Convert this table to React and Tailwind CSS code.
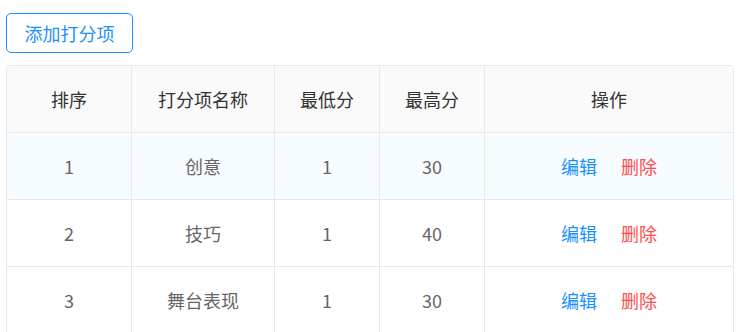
import React from "react";

const rows = [
  { i: 1, name: "创意", min: 1, max: 30, hover: true },
  { i: 2, name: "技巧", min: 1, max: 40 },
  { i: 3, name: "舞台表现", min: 1, max: 30 },
];

const cols = "grid grid-cols-[125px_143px_105px_105px_1fr]";

export default function App() {
  return (
    <div className="w-[746px] h-[332px] overflow-hidden bg-white pl-[6px] pr-[12px] pt-[13px]" style={{ fontFamily: '"Noto Sans CJK SC", "Noto Sans", sans-serif' }}>
      <button className="h-[40px] w-[127px] rounded-[5px] border border-[#1890ff] text-[18px] text-[#1890ff] bg-white">
        添加打分项
      </button>
      <div className="mt-[12px] border border-[#e8e8e8] rounded-t-[4px] overflow-hidden">
        <div className={`${cols} h-[66px] bg-[#fafafa] text-[18px] text-[#333]`}>
          {["排序", "打分项名称", "最低分", "最高分", "操作"].map((h, k) => (
            <div key={h} className={`flex items-center justify-center ${k < 4 ? "border-r border-[#e8e8e8]" : ""}`}>{h}</div>
          ))}
        </div>
        {rows.map((r) => (
          <div key={r.i} className={`${cols} h-[67px] border-t border-[#e8e8e8] text-[18px] text-[#666] ${r.hover ? "bg-[#f6fcff]" : "bg-white"}`}>
            <div className="flex items-center justify-center border-r border-[#e8e8e8]">{r.i}</div>
            <div className="flex items-center justify-center border-r border-[#e8e8e8]">{r.name}</div>
            <div className="flex items-center justify-center border-r border-[#e8e8e8]">{r.min}</div>
            <div className="flex items-center justify-center border-r border-[#e8e8e8]">{r.max}</div>
            <div className="flex items-center justify-center gap-[24px]">
              <span className="text-[#1890ff]">编辑</span>
              <span className="text-[#ff4d4f]">删除</span>
            </div>
          </div>
        ))}
      </div>
    </div>
  );
}
